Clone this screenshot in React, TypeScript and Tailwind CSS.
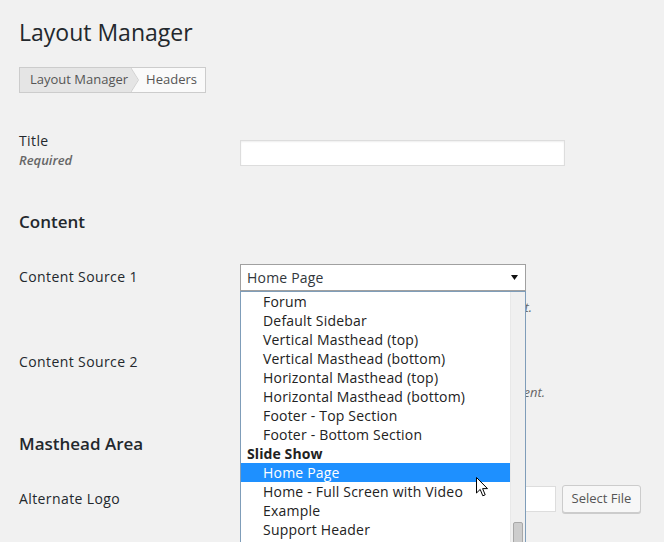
import React from "react";

const items: { label: string; group?: boolean; active?: boolean }[] = [
  { label: "Forum" },
  { label: "Default Sidebar" },
  { label: "Vertical Masthead (top)" },
  { label: "Vertical Masthead (bottom)" },
  { label: "Horizontal Masthead (top)" },
  { label: "Horizontal Masthead (bottom)" },
  { label: "Footer - Top Section" },
  { label: "Footer - Bottom Section" },
  { label: "Slide Show", group: true },
  { label: "Home Page", active: true },
  { label: "Home - Full Screen with Video" },
  { label: "Example" },
  { label: "Support Header" },
  { label: "Blog Header" },
];

function Label({ children, className = "" }: { children: React.ReactNode; className?: string }) {
  return (
    <div className={"w-[221px] shrink-0 text-[14px] leading-[19px] tracking-[0.4px] text-[#23282d] " + className}>
      {children}
    </div>
  );
}

function SelectBox() {
  return (
    <div className="flex h-[27px] w-[286px] items-center justify-between border border-[#a0a0a0] bg-white pl-[6px] pr-[7px] text-[14px] tracking-[0.2px] text-[#32373c]">
      <span>Home Page</span>
      <svg width="7" height="5" viewBox="0 0 7 5">
        <polygon points="0,0 7,0 3.5,5" fill="#111" />
      </svg>
    </div>
  );
}

export default function App() {
  return (
    <div className="relative h-[542px] overflow-hidden bg-[#f1f1f1] px-[19px] pt-[17px] font-['Open_Sans',sans-serif]">
      <h1 className="text-[23px] font-normal leading-[30px] text-[#23282d]">Layout Manager</h1>

      {/* breadcrumb */}
      <div className="mt-[20px] flex h-[26px] w-fit border border-[#ccc] text-[13px] text-[#555]">
        <div className="flex items-center bg-[#e5e5e5] pl-[10px] pr-[3px]">Layout Manager</div>
        <svg width="8" height="24" viewBox="0 0 8 24" className="bg-[#fafafa]">
          <polygon points="0,0 7,12 0,24" fill="#e5e5e5" />
          <polyline points="0,0 7.5,12 0,24" fill="none" stroke="#d2d2d2" strokeWidth="1" />
        </svg>
        <div className="flex items-center bg-[#fafafa] pl-[7px] pr-[8px]">Headers</div>
      </div>

      {/* Title */}
      <div className="mt-[38px] flex">
        <div className="w-[221px] shrink-0">
          <div className="text-[14px] leading-[19px] tracking-[0.4px] text-[#23282d]">Title</div>
          <div className="mt-[1px] text-[13px] font-semibold italic leading-[18px] text-[#666]">Required</div>
        </div>
        <div className="mt-[9px] h-[26px] w-[325px] border border-[#ddd] bg-white shadow-[inset_0_1px_2px_rgba(0,0,0,0.07)]" />
      </div>

      <h3 className="mt-[41px] text-[17px] font-semibold leading-[23px] text-[#23282d]">Content</h3>

      <div className="mt-[31px] flex">
        <Label className="mt-[3px]">Content Source 1</Label>
        <div>
          <SelectBox />
          <p className="mt-[7px] w-[292px] whitespace-nowrap text-right text-[13px] italic leading-[18px] text-[#666]">
            Select the page or sidebar to display in this layout.
          </p>
        </div>
      </div>

      <div className="mt-[33px] flex">
        <Label className="mt-[3px]">Content Source 2</Label>
        <div>
          <SelectBox />
          <p className="mt-[7px] w-[305px] whitespace-nowrap text-right text-[13px] italic leading-[18px] text-[#666]">
            Select a secondary source for additional content.
          </p>
        </div>
      </div>

      <h3 className="mt-[31px] text-[17px] font-semibold leading-[23px] text-[#23282d]">Masthead Area</h3>

      <div className="mt-[30px] flex">
        <Label className="mt-[4px]">Alternate Logo</Label>
        <div className="flex items-start">
          <div className="mt-[1px] h-[26px] w-[316px] border border-[#ddd] bg-white" />
          <button className="ml-[6px] h-[28px] w-[79px] rounded-[3px] border border-[#ccc] bg-[#f7f7f7] text-[13px] text-[#555] shadow-[0_1px_0_#ccc]">
            Select File
          </button>
        </div>
      </div>

      {/* open dropdown list */}
      <div className="absolute left-[240px] top-[291px] flex h-[260px] w-[286px] overflow-hidden border-x border-t border-[#7f9db9] bg-white">
        <ul className="flex-1">
          {items.map((it) =>
            it.group ? (
              <li key={it.label} className="h-[19px] pl-[6px] text-[14px] font-bold leading-[19px] tracking-[0.1px] text-[#222]">
                {it.label}
              </li>
            ) : (
              <li
                key={it.label}
                className={
                  "h-[19px] pl-[22px] text-[14px] leading-[19px] tracking-[0.2px] " +
                  (it.active ? "bg-[#1e90ff] text-white" : "text-[#222]")
                }
              >
                {it.label}
              </li>
            )
          )}
        </ul>
        <div className="relative w-[15px] shrink-0 border-l border-[#e8e8e8] bg-[#f0f0f0]">
          <div className="absolute left-[2px] top-[230px] h-[40px] w-[10px] rounded-[2px] border border-[#a8a8a8] bg-[#cdcdcd]" />
        </div>
      </div>

      {/* mouse cursor */}
      <svg className="absolute left-[476px] top-[477px]" width="13" height="21" viewBox="0 0 13 21">
        <path d="M0.5 0.5 L0.5 16 L4.2 12.4 L6.8 18.8 L9.2 17.8 L6.6 11.6 L11.5 11.6 Z" fill="#fff" stroke="#000" strokeWidth="1" strokeLinejoin="round" />
      </svg>
    </div>
  );
}
